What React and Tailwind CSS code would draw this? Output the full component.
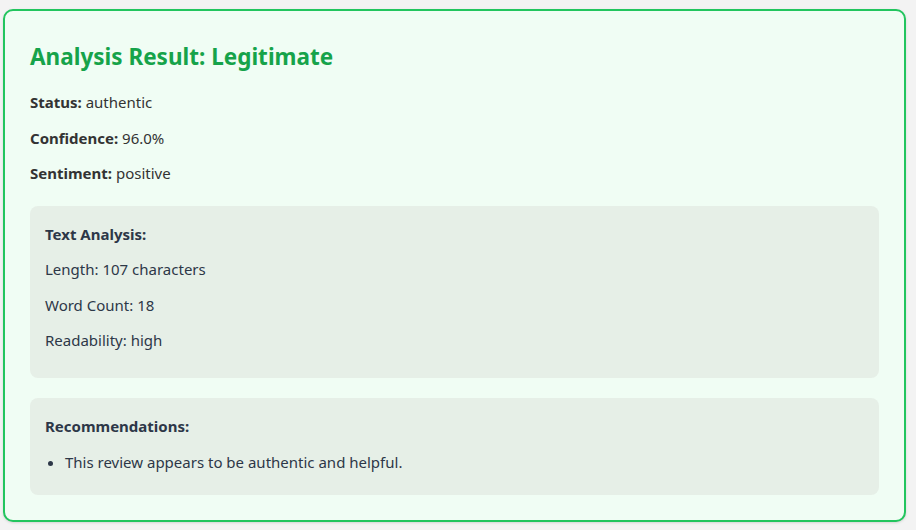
export default function App() {
  const result = {
    label: "Legitimate",
    status: "authentic",
    confidence: "96.0%",
    sentiment: "positive",
    length: 107,
    words: 18,
    readability: "high",
    recommendations: ["This review appears to be authentic and helpful."],
  };

  return (
    <div className="min-h-[530px] bg-[#f3f3f3] pl-[3px] pt-[9px] font-['Noto_Sans',sans-serif] text-[15px] text-[#333]">
      <div className="w-[903px] rounded-[10px] border-2 border-[#22c55e] bg-[#f0fdf4] px-[25px] pt-[30px] pb-[25px] shadow-sm">
        <h2 className="text-[22.5px] font-bold leading-[32px] text-[#16a34a]">
          Analysis Result: {result.label}
        </h2>
        <p className="mt-[18px] leading-[22.5px]">
          <strong>Status:</strong> {result.status}
        </p>
        <p className="mt-[13px] leading-[22.5px]">
          <strong>Confidence:</strong> {result.confidence}
        </p>
        <p className="mt-[13px] leading-[22.5px]">
          <strong>Sentiment:</strong> {result.sentiment}
        </p>

        {/* text analysis */}
        <div className="mt-[21px] rounded-lg bg-[#e6efe7] px-[15px] pt-[17px] pb-[26px] text-[#2d3748]">
          <p className="font-bold leading-[22.5px]">Text Analysis:</p>
          <p className="mt-[13px] leading-[22.5px]">Length: {result.length} characters</p>
          <p className="mt-[13px] leading-[22.5px]">Word Count: {result.words}</p>
          <p className="mt-[13px] leading-[22.5px]">Readability: {result.readability}</p>
        </div>

        {/* recommendations */}
        <div className="mt-[20px] rounded-lg bg-[#e6efe7] px-[15px] pt-[17px] pb-[22px] text-[#2d3748]">
          <p className="font-bold leading-[22.5px]">Recommendations:</p>
          <ul className="mt-[13.5px] list-disc pl-[20px]">
            {result.recommendations.map((r) => (
              <li key={r} className="leading-[22.5px]">{r}</li>
            ))}
          </ul>
        </div>
      </div>
    </div>
  );
}
